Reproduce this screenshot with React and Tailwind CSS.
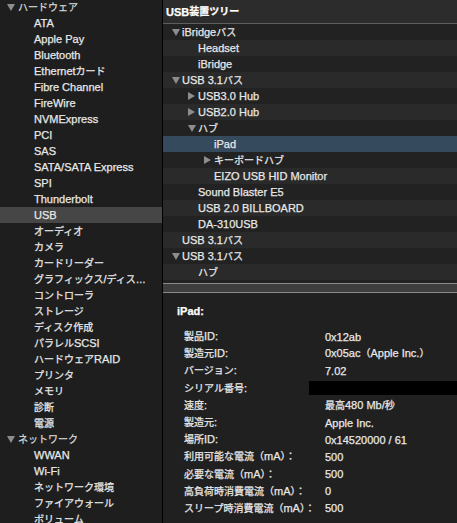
import React from "react";

const FONT = { fontFamily: '"Liberation Sans", "Noto Sans CJK JP", sans-serif' };

function T({ s }) {
  const parts = s.split(/([\u3000-\u30ff\u4e00-\u9fff\uff00-\uffef…]+)/).filter(Boolean);
  return (
    <>
      {parts.map((p, i) =>
        /[\u3000-\u30ff\u4e00-\u9fff\uff00-\uffef…]/.test(p) ? (
          <span key={i} className="text-[10px]">
            {p}
          </span>
        ) : (
          <span key={i}>{p}</span>
        )
      )}
    </>
  );
}

function Down() {
  return (
    <svg width="8" height="7" viewBox="0 0 8 7" className="shrink-0">
      <polygon points="0,0 8,0 4,7" fill="#8d8d8d" />
    </svg>
  );
}
function Right() {
  return (
    <svg width="7" height="8" viewBox="0 0 7 8" className="shrink-0">
      <polygon points="0,0 7,4 0,8" fill="#8d8d8d" />
    </svg>
  );
}

const leftItems = [
  { t: "ハードウェア", p: true },
  { t: "ATA" },
  { t: "Apple Pay" },
  { t: "Bluetooth" },
  { t: "Ethernetカード" },
  { t: "Fibre Channel" },
  { t: "FireWire" },
  { t: "NVMExpress" },
  { t: "PCI" },
  { t: "SAS" },
  { t: "SATA/SATA Express" },
  { t: "SPI" },
  { t: "Thunderbolt" },
  { t: "USB", sel: true },
  { t: "オーディオ" },
  { t: "カメラ" },
  { t: "カードリーダー" },
  { t: "グラフィックス/ディス…" },
  { t: "コントローラ" },
  { t: "ストレージ" },
  { t: "ディスク作成" },
  { t: "パラレルSCSI" },
  { t: "ハードウェアRAID" },
  { t: "プリンタ" },
  { t: "メモリ" },
  { t: "診断" },
  { t: "電源" },
  { t: "ネットワーク", p: true },
  { t: "WWAN" },
  { t: "Wi-Fi" },
  { t: "ネットワーク環境" },
  { t: "ファイアウォール" },
  { t: "ボリューム" },
];

const tree = [
  { t: "iBridgeバス", l: 0, tri: "d" },
  { t: "Headset", l: 1 },
  { t: "iBridge", l: 1 },
  { t: "USB 3.1バス", l: 0, tri: "d" },
  { t: "USB3.0 Hub", l: 1, tri: "r" },
  { t: "USB2.0 Hub", l: 1, tri: "r" },
  { t: "ハブ", l: 1, tri: "d" },
  { t: "iPad", l: 2, sel: true },
  { t: "キーボードハブ", l: 2, tri: "r" },
  { t: "EIZO USB HID Monitor", l: 2 },
  { t: "Sound Blaster E5", l: 1 },
  { t: "USB 2.0 BILLBOARD", l: 1 },
  { t: "DA-310USB", l: 1 },
  { t: "USB 3.1バス", l: 0 },
  { t: "USB 3.1バス", l: 0, tri: "d" },
  { t: "ハブ", l: 1 },
];

const details = [
  ["製品ID:", "0x12ab"],
  ["製造元ID:", "0x05ac（Apple Inc.）"],
  ["バージョン:", "7.02"],
  ["シリアル番号:", null],
  ["速度:", "最高480 Mb/秒"],
  ["製造元:", "Apple Inc."],
  ["場所ID:", "0x14520000 / 61"],
  ["利用可能な電流（mA）：", "500"],
  ["必要な電流（mA）：", "500"],
  ["高負荷時消費電流（mA）：", "0"],
  ["スリープ時消費電流（mA）：", "500"],
];

function LeftRow({ item }) {
  if (item.p) {
    return (
      <div className="h-[16px] flex items-center pl-[7px] gap-[3px] text-[#d8d8d8]">
        <Down />
        <span className="whitespace-nowrap">
          <T s={item.t} />
        </span>
      </div>
    );
  }
  return (
    <div
      className={
        "h-[16px] flex items-center pl-[34px] text-[#e8e8e8] " +
        (item.sel ? "bg-[#464646]" : "")
      }
    >
      <span className="whitespace-nowrap">
        <T s={item.t} />
      </span>
    </div>
  );
}

function TreeRow({ item, i }) {
  const textX = 19 + item.l * 16;
  const bg = item.sel ? "bg-[#364a5e]" : i % 2 === 1 ? "bg-[#2a2a2a]" : "bg-[#222222]";
  return (
    <div className={"h-[16px] relative flex items-center text-[#e8e8e8] " + bg}>
      {item.tri && (
        <div
          className="absolute top-0 h-[16px] flex items-center"
          style={{ left: textX - 10 }}
        >
          {item.tri === "d" ? <Down /> : <Right />}
        </div>
      )}
      <span className="whitespace-nowrap" style={{ paddingLeft: textX }}>
        <T s={item.t} />
      </span>
    </div>
  );
}

export default function App() {
  return (
    <div
      className="w-[457px] h-[523px] overflow-hidden flex bg-[#1e1e1e] text-[11px] leading-[16px] [-webkit-text-stroke:0.25px_currentColor]"
      style={FONT}
    >
      <div className="w-[162px] shrink-0 bg-[#1e1e1e] overflow-hidden">
        <div className="mt-[-1px]">
          {leftItems.map((it, i) => (
            <LeftRow key={i} item={it} />
          ))}
        </div>
      </div>
      <div className="w-px shrink-0 bg-black" />
      <div className="flex-1 flex flex-col min-w-0">
        <div className="h-[24px] shrink-0 bg-[#2c2c2c] border-b border-[#5e5e5e] flex items-center pl-[3px] text-white font-bold">
          <T s="USB装置ツリー" />
        </div>
        <div className="h-[259px] shrink-0 bg-[#222222]">
          {tree.map((it, i) => (
            <TreeRow key={i} item={it} i={i} />
          ))}
        </div>
        <div className="h-[10px] shrink-0 bg-[#3e3e3e] border-y border-[#8a8a8a]" />
        <div className="flex-1 bg-[#202020] pt-[10px] text-[#e8e8e8]">
          <div className="pl-[14px] font-bold text-white">iPad:</div>
          <div className="mt-[9px] pl-[21px]">
            {details.map(([k, v], i) => (
              <div key={i} className="h-[17.2px] flex items-center">
                <div className="w-[141px] shrink-0 whitespace-nowrap">
                  <T s={k} />
                </div>
                {v === null ? (
                  <div className="flex-1 ml-[-16px] h-[14px] bg-black" />
                ) : (
                  <div className="whitespace-nowrap">
                    <T s={v} />
                  </div>
                )}
              </div>
            ))}
          </div>
        </div>
      </div>
    </div>
  );
}
